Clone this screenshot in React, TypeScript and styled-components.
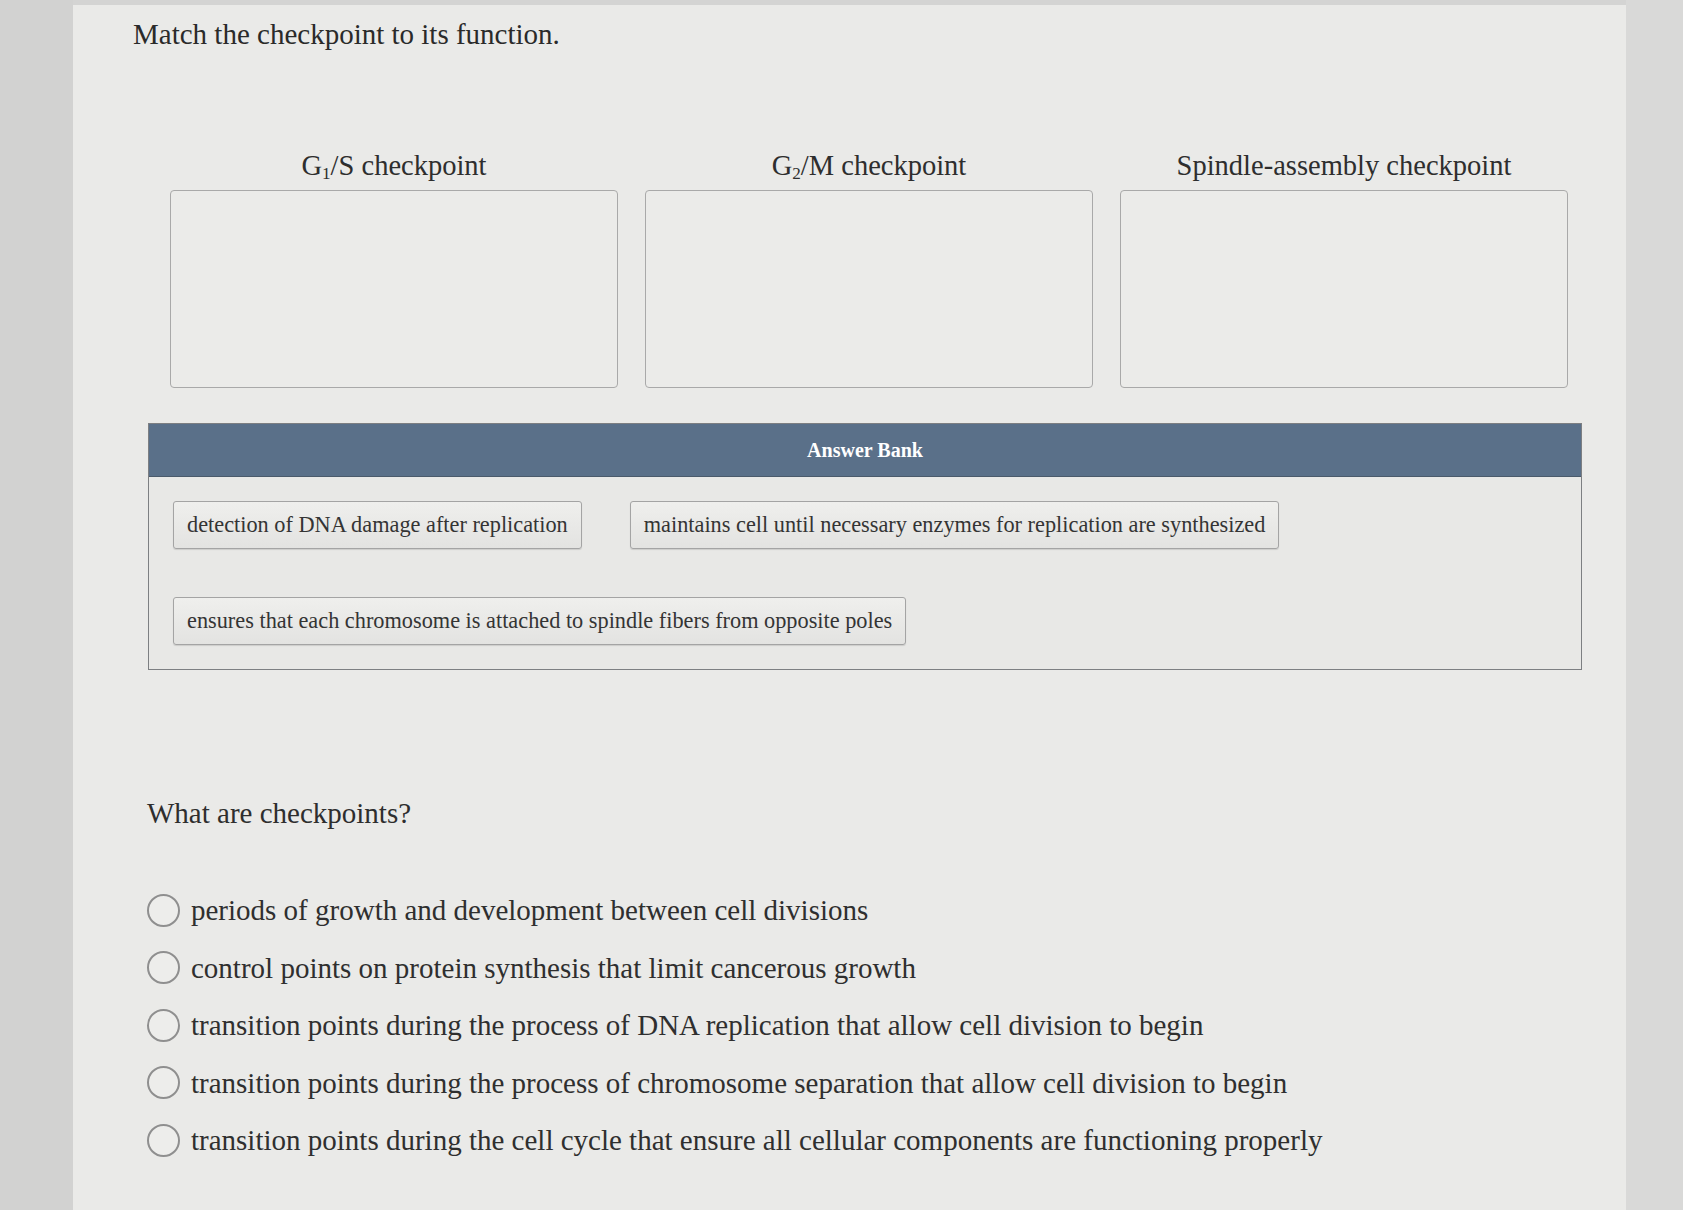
import React from 'react';
import styled, { createGlobalStyle } from 'styled-components';

const GlobalStyle = createGlobalStyle`
  html, body {
    margin: 0;
    padding: 0;
    background: #d4d4d3;
  }
  body {
    font-family: 'Liberation Serif', 'Times New Roman', serif;
    color: #2f2f2f;
  }
`;

const Screen = styled.div`
  display: flex;
  min-height: 1210px;
`;

const Gutter = styled.div<{ $width: number; $shade: string }>`
  flex: 0 0 ${props => props.$width}px;
  background: ${props => props.$shade};
`;

const Panel = styled.main`
  flex: 1;
  margin-top: 5px;
  background: #eaeae8;
  padding: 12px 0 0 0;
`;

const Title = styled.h1`
  margin: 0 0 0 60px;
  font-size: 29px;
  font-weight: normal;
  line-height: 34px;
  color: #2a2a2a;
`;

const TargetGrid = styled.div`
  display: grid;
  grid-template-columns: repeat(3, 448px);
  column-gap: 27px;
  margin: 98px 0 0 97px;
`;

const Target = styled.div`
  display: flex;
  flex-direction: column;
  align-items: center;
`;

const TargetLabel = styled.div`
  font-size: 28.5px;
  line-height: 34px;
  margin-bottom: 7px;
  color: #2e2e2e;

  sub {
    font-size: 0.6em;
    vertical-align: -0.25em;
    line-height: 0;
  }
`;

const DropZone = styled.div`
  align-self: stretch;
  height: 196px;
  border: 1px solid #a9a9a9;
  border-radius: 4px;
  background: #ebebe9;
`;

const Bank = styled.section`
  margin: 35px 44px 0 75px;
  border: 1.5px solid #7d7f82;
  background: #e8e8e6;
`;

const BankHeader = styled.header`
  height: 52px;
  display: flex;
  align-items: center;
  justify-content: center;
  background: #5a7089;
  border-bottom: 1px solid #4a5a6b;
  color: #ffffff;
  font-size: 20px;
  font-weight: bold;
`;

const ChipList = styled.div`
  display: flex;
  flex-wrap: wrap;
  align-items: flex-start;
`;

const Chip = styled.div`
  margin: 24px;
  padding: 10px 13px;
  font-size: 22.3px;
  line-height: 26px;
  color: #343434;
  border: 1px solid #a4a4a4;
  border-radius: 3px;
  background: linear-gradient(#efefed, #e3e3e1);
  box-shadow: 0 1px 1px rgba(0, 0, 0, 0.12);
  white-space: nowrap;
`;

const Question = styled.h2`
  margin: 126px 0 0 74px;
  font-size: 29px;
  font-weight: normal;
  line-height: 34px;
  color: #2e2e2e;
`;

const Options = styled.div`
  display: flex;
  flex-direction: column;
  gap: 23.5px;
  margin: 63px 0 0 74px;
`;

const Option = styled.label`
  display: flex;
  align-items: center;
  gap: 11px;
  font-size: 29px;
  line-height: 34px;
  color: #2f2f2f;
`;

const Radio = styled.span`
  flex: 0 0 auto;
  width: 29px;
  height: 29px;
  border-radius: 50%;
  border: 2px solid #8f8f8f;
  background: #ededeb;
`;

const answers = [
  'detection of DNA damage after replication',
  'maintains cell until necessary enzymes for replication are synthesized',
  'ensures that each chromosome is attached to spindle fibers from opposite poles',
];

const choices = [
  'periods of growth and development between cell divisions',
  'control points on protein synthesis that limit cancerous growth',
  'transition points during the process of DNA replication that allow cell division to begin',
  'transition points during the process of chromosome separation that allow cell division to begin',
  'transition points during the cell cycle that ensure all cellular components are functioning properly',
];

const App: React.FunctionComponent = () => (
  <>
    <GlobalStyle />
    <Screen>
      <Gutter $width={73} $shade="#d2d2d1" />
      <Panel>
        <Title>Match the checkpoint to its function.</Title>

        <TargetGrid>
          <Target>
            <TargetLabel>
              G<sub>1</sub>/S checkpoint
            </TargetLabel>
            <DropZone />
          </Target>
          <Target>
            <TargetLabel>
              G<sub>2</sub>/M checkpoint
            </TargetLabel>
            <DropZone />
          </Target>
          <Target>
            <TargetLabel>Spindle-assembly checkpoint</TargetLabel>
            <DropZone />
          </Target>
        </TargetGrid>

        <Bank>
          <BankHeader>Answer Bank</BankHeader>
          <ChipList>
            {answers.map(text => (
              <Chip key={text}>{text}</Chip>
            ))}
          </ChipList>
        </Bank>

        <Question>What are checkpoints?</Question>
        <Options>
          {choices.map(text => (
            <Option key={text}>
              <Radio />
              {text}
            </Option>
          ))}
        </Options>
      </Panel>
      <Gutter $width={57} $shade="#d9d9d8" />
    </Screen>
  </>
);

export default App;
